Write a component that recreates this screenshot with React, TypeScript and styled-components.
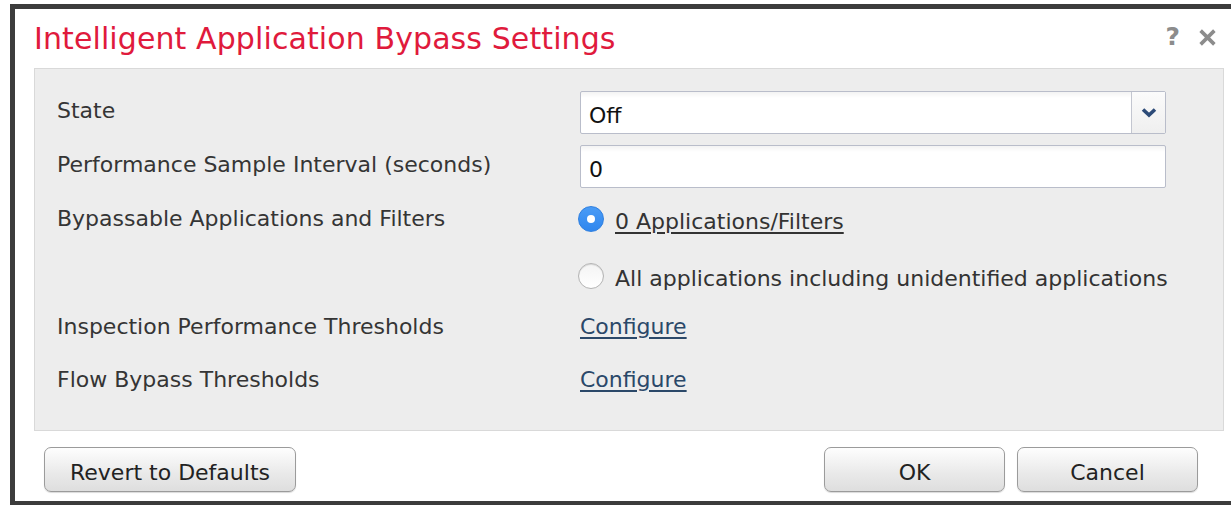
import React from "react";
import styled, { createGlobalStyle, css } from "styled-components";

const GlobalStyle = createGlobalStyle`
  html, body {
    margin: 0;
    padding: 0;
    background: #ffffff;
    overflow: hidden;
  }
  body {
    font-family: "DejaVu Sans", Verdana, sans-serif;
    color: #333333;
  }
`;

const rows = [
  { label: "Inspection Performance Thresholds", link: "Configure" },
  { label: "Flow Bypass Thresholds", link: "Configure" },
];

function App() {
  return (
    <>
      <GlobalStyle />
      <Dialog>
        <TitleBar>
          <Title>Intelligent Application Bypass Settings</Title>
          <TitleTools>
            <HelpIcon>?</HelpIcon>
            <CloseIcon viewBox="0 0 18 18" aria-label="Close">
              <path d="M2.5 2.5 L15.5 15.5 M15.5 2.5 L2.5 15.5" />
            </CloseIcon>
          </TitleTools>
        </TitleBar>

        <Panel>
          <Row>
            <Label>State</Label>
            <SelectBox>
              <FieldValue>Off</FieldValue>
              <SelectArrow>
                <svg width="16" height="11" viewBox="0 0 16 11">
                  <path d="M2 2.5 L8 8 L14 2.5" fill="none" stroke="#2d4b78" strokeWidth="3.6" />
                </svg>
              </SelectArrow>
            </SelectBox>
          </Row>
          <Row>
            <Label>Performance Sample Interval (seconds)</Label>
            <InputBox>
              <FieldValue>0</FieldValue>
            </InputBox>
          </Row>
          <Row>
            <Label>Bypassable Applications and Filters</Label>
            <RadioGroup>
              <RadioOption>
                <Radio checked />
                <RadioText underline>0 Applications/Filters</RadioText>
              </RadioOption>
              <RadioOption>
                <Radio />
                <RadioText>All applications including unidentified applications</RadioText>
              </RadioOption>
            </RadioGroup>
          </Row>
          {rows.map((row) => (
            <Row key={row.label}>
              <Label>{row.label}</Label>
              <LinkCell>
                <Link href="#">{row.link}</Link>
              </LinkCell>
            </Row>
          ))}
        </Panel>

        <Footer>
          <Button wide>Revert to Defaults</Button>
          <FooterRight>
            <Button>OK</Button>
            <Button>Cancel</Button>
          </FooterRight>
        </Footer>
      </Dialog>
    </>
  );
}

const Dialog = styled.div`
  box-sizing: border-box;
  margin: 4px 0 0 10px;
  width: 1233px;
  height: 501px;
  background: #ffffff;
  border-left: 5px solid #3c3c3c;
  border-top: 5px solid #3c3c3c;
  border-bottom: 4px solid #3c3c3c;
  display: flex;
  flex-direction: column;
`;

const TitleBar = styled.div`
  box-sizing: border-box;
  height: 59px;
  padding: 12px 26px 0 19px;
  display: flex;
  justify-content: space-between;
  align-items: flex-start;
`;

const Title = styled.h1`
  margin: 0;
  font-size: 30px;
  font-weight: normal;
  color: #e01a3c;
  line-height: 36px;
  letter-spacing: 0.1px;
`;

const TitleTools = styled.div`
  display: flex;
  align-items: center;
  gap: 18px;
  margin-top: 2px;
`;

const HelpIcon = styled.span`
  font-size: 25px;
  font-weight: bold;
  color: #8c8c8c;
  line-height: 28px;
`;

const CloseIcon = styled.svg`
  width: 19px;
  height: 19px;
  stroke: #8c8c8c;
  stroke-width: 3.4;
`;

const Panel = styled.div`
  box-sizing: border-box;
  margin: 0 19px;
  height: 363px;
  background: #ededed;
  border: 1px solid #d9d9d9;
  padding: 22px 0 0 22px;
  display: flex;
  flex-direction: column;
  gap: 11px;
`;

const Row = styled.div`
  display: grid;
  grid-template-columns: 523px 586px;
  align-items: start;
  min-height: 40px;
`;

const Label = styled.div`
  font-size: 22px;
  line-height: 40px;
  color: #353535;
  white-space: nowrap;
`;

const fieldFrame = css`
  box-sizing: border-box;
  height: 43px;
  background: linear-gradient(#f3f3f3 0px, #ffffff 6px);
  border: 1px solid #b9bdca;
  border-radius: 2px;
  display: flex;
  align-items: center;
`;

const SelectBox = styled.div`
  ${fieldFrame}
`;

const InputBox = styled.div`
  ${fieldFrame}
`;

const FieldValue = styled.span`
  flex: 1;
  padding-left: 8px;
  font-size: 22px;
  color: #111111;
  padding-top: 5px;
`;

const SelectArrow = styled.div`
  width: 33px;
  height: 100%;
  border-left: 1px solid #c3c6d0;
  background: linear-gradient(#fbfbfb, #efefef);
  display: flex;
  align-items: center;
  justify-content: center;
`;

const RadioGroup = styled.div`
  display: flex;
  flex-direction: column;
  gap: 17px;
  margin-left: -2px;
`;

const RadioOption = styled.label`
  display: flex;
  align-items: center;
  gap: 11px;
  height: 40px;
  white-space: nowrap;
`;

const Radio = styled.span<{ checked?: boolean }>`
  box-sizing: border-box;
  flex: none;
  width: 26px;
  height: 26px;
  border-radius: 50%;
  display: flex;
  align-items: center;
  justify-content: center;
  ${({ checked }) =>
    checked
      ? css`
          background: linear-gradient(#4a9cf6, #2f86ee);
          border: 1px solid #2e7fe0;
          &::after {
            content: "";
            width: 8px;
            height: 8px;
            border-radius: 50%;
            background: #ffffff;
          }
        `
      : css`
          background: linear-gradient(#f4f4f4, #ffffff);
          border: 1px solid #b4b4b4;
          box-shadow: inset 0 1px 1px rgba(0, 0, 0, 0.12);
        `}
`;

const RadioText = styled.span<{ underline?: boolean }>`
  font-size: 22px;
  color: #333333;
  padding-top: 4px;
  text-decoration: ${({ underline }) => (underline ? "underline" : "none")};
  text-underline-offset: 3px;
`;

const LinkCell = styled.div`
  line-height: 40px;
`;

const Link = styled.a`
  font-size: 22px;
  color: #2b4869;
  text-decoration: underline;
  text-underline-offset: 3px;
`;

const Footer = styled.div`
  flex: 1;
  display: flex;
  justify-content: space-between;
  align-items: flex-start;
  padding: 16px 45px 0 29px;
`;

const FooterRight = styled.div`
  display: flex;
  gap: 12px;
`;

const Button = styled.button<{ wide?: boolean }>`
  box-sizing: border-box;
  width: ${({ wide }) => (wide ? "252px" : "181px")};
  height: 45px;
  border: 1px solid #9b9b9b;
  border-radius: 7px;
  background: linear-gradient(#fefefe, #e9e9e9 60%, #dedede);
  box-shadow: 0 1px 1px rgba(0, 0, 0, 0.15);
  font-family: "DejaVu Sans", Verdana, sans-serif;
  font-size: 22px;
  color: #222222;
  padding: 5px 0 0;
  cursor: pointer;
`;

export default App;
